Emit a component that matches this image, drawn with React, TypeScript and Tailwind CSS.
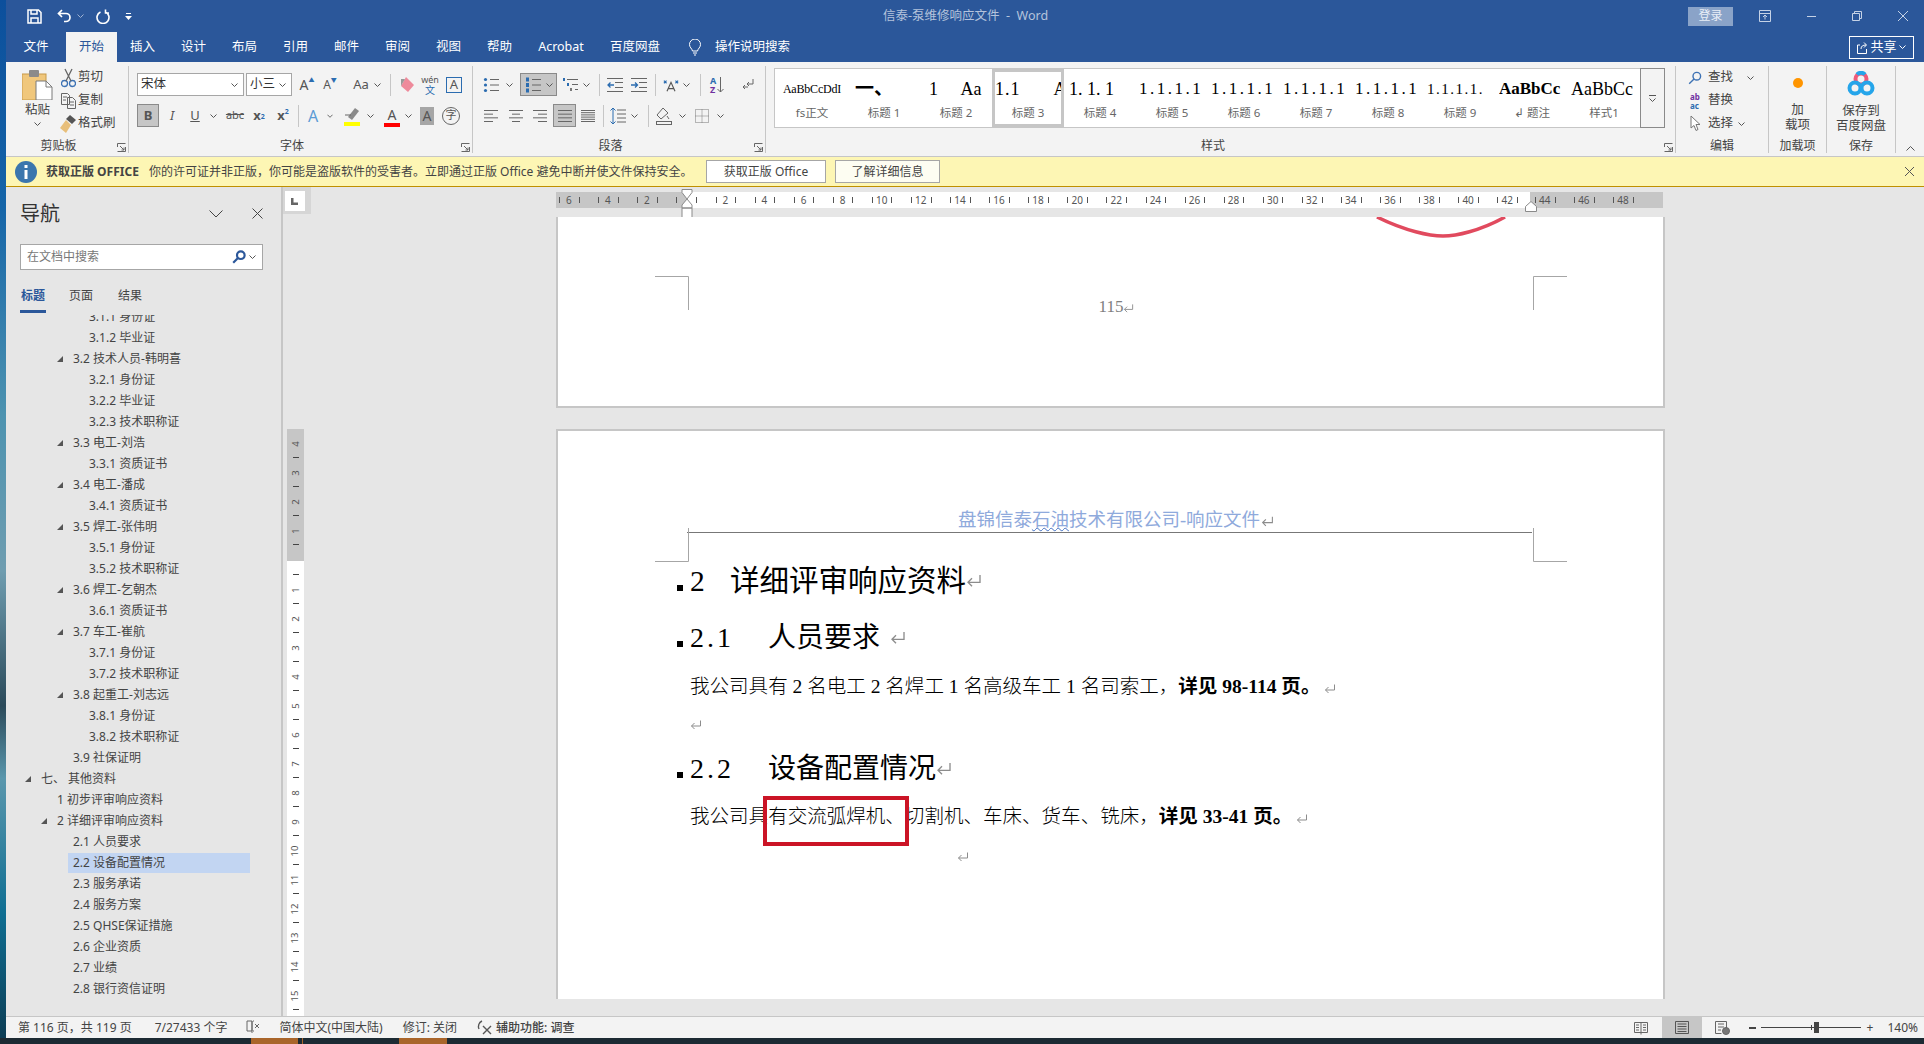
import type { ReactNode } from 'react'
import { clsx } from 'clsx'

const SERIF = "font-['Liberation_Serif','Noto_Sans_CJK_SC',serif]"

function Chev({ color = '#555' }: { color?: string }) {
  return (
    <svg width="7" height="4" viewBox="0 0 7 4" fill="none" stroke={color}>
      <path d="M.5.5 3.5 3.5 6.5.5" />
    </svg>
  )
}

function Ret({ size = 12, className }: { size?: number; className?: string }) {
  return (
    <svg width={size} height={size} viewBox="0 0 12 12" fill="none" stroke="#8c8c8c" strokeWidth="1" className={clsx('inline-block', className)}>
      <path d="M10.5 1.5V7H1.5M4.5 4 1.5 7l3 3" />
    </svg>
  )
}

function Slot({ className, children }: { className?: string; children?: ReactNode }) {
  return <div className={clsx('flex h-full shrink-0 items-center justify-center', className)}>{children}</div>
}

function Sep({ className }: { className?: string }) {
  return <div className={clsx('h-[22px] w-px shrink-0 bg-[#c6c6c6]', className)} />
}

function Launcher() {
  return (
    <svg width="9" height="9" viewBox="0 0 9 9" fill="none" stroke="#666" className="absolute bottom-[1px] right-[2px]">
      <path d="M.5 4V.5H8.5M.5 8.5H8.5V4M3 3l4 4M7 4.5V7H4.5" />
    </svg>
  )
}

function Lines({ rows, w = 16 }: { rows: [number, number][]; w?: number }) {
  return (
    <svg width={w} height="14" viewBox={`0 0 ${w} 14`} stroke="#666" strokeWidth="1">
      {rows.map(([a, b], i) => (
        <path key={i} d={`M${a} ${1.5 + i * (11 / (rows.length - 1))}H${b}`} />
      ))}
    </svg>
  )
}

function BulletIcon({ numbered }: { numbered?: boolean }) {
  return (
    <svg width="16" height="16" viewBox="0 0 16 16">
      {[2.5, 8, 13.5].map((y) => (
        <g key={y}>
          {numbered ? <rect x="1" y={y - 2} width="3" height="4" fill="#2b6cb0" /> : <circle cx="2.5" cy={y} r="1.6" fill="#2b6cb0" />}
          <path d={`M7 ${y}H16`} stroke="#666" />
        </g>
      ))}
    </svg>
  )
}

function MultiIcon() {
  return (
    <svg width="16" height="16" viewBox="0 0 16 16">
      <rect x="0" y="1" width="2" height="3" fill="#2b6cb0" />
      <rect x="4" y="6" width="2" height="3" fill="#2b6cb0" />
      <rect x="7" y="11" width="2" height="3" fill="#7a7a7a" />
      <path d="M4 2.5H15M9 7.5H15M12 12.5H15" stroke="#666" />
    </svg>
  )
}

function IndentIcon({ inc }: { inc?: boolean }) {
  return (
    <svg width="16" height="14" viewBox="0 0 16 14" fill="none">
      <path d="M0 .5H16M0 13.5H16M8 4.5H16M8 9.5H16" stroke="#666" />
      <path d={inc ? 'M0 7H6M4 4.5 6.5 7 4 9.5' : 'M7 7H1M3.5 4.5 1 7l2.5 2.5'} stroke="#2b6cb0" strokeWidth="1.3" />
    </svg>
  )
}

function PasteIcon() {
  return (
    <svg width="31" height="30" viewBox="0 0 31 30">
      <rect x="0" y="4" width="24" height="26" fill="#f0c77c" stroke="#c79a4a" />
      <rect x="7" y="0" width="10" height="7" rx="1" fill="#8a8a8a" />
      <path d="M14 11h10l6 6v13H14z" fill="#fff" stroke="#7a7a7a" />
      <path d="M24 11v6h6" fill="none" stroke="#7a7a7a" />
    </svg>
  )
}

function BaiduIcon() {
  return (
    <svg width="28" height="26" viewBox="0 0 28 26" fill="none" strokeWidth="4">
      <circle cx="14" cy="8" r="5.5" stroke="#ef5a7a" />
      <circle cx="8" cy="17" r="5.5" stroke="#25a5ea" />
      <circle cx="20" cy="17" r="5.5" stroke="#25a5ea" />
      <path d="M10 3.5a5.5 5.5 0 0 1 8 0" stroke="#25a5ea" />
    </svg>
  )
}

function SearchGlyph({ color = '#2b579a', width = 2.2 }: { color?: string; width?: number }) {
  return (
    <svg width="14" height="14" viewBox="0 0 14 14" fill="none" stroke={color} strokeWidth={width}>
      <circle cx="8.8" cy="5.2" r="3.8" />
      <path d="M6 8 1.2 12.8" />
    </svg>
  )
}

function CropMark({ className, d }: { className: string; d: string }) {
  return (
    <svg width="34" height="34" viewBox="0 0 34 34" fill="none" stroke="#a6a6a6" className={clsx('absolute', className)}>
      <path d={d} />
    </svg>
  )
}

function Group({ className, label, labelClass, launcher, children }: { className: string; label: string; labelClass?: string; launcher?: boolean; children?: ReactNode }) {
  return (
    <div className={clsx('flex h-[87px] shrink-0 flex-col border-r border-[#c6c6c6]', className)}>
      <div className="min-h-0 flex-1">{children}</div>
      <div className={clsx('relative h-[15px] text-center text-[12px] leading-[15px] text-[#444]', labelClass)}>
        {label}
        {launcher && <Launcher />}
      </div>
    </div>
  )
}

function TitleBar() {
  return (
    <div className="flex h-[32px] items-center bg-[#2b579a] pl-[21px] text-white">
      <Slot className="w-[15px]">
        <svg width="15" height="15" viewBox="0 0 15 15" fill="none" stroke="#fff" strokeWidth="1.5">
          <path d="M1 1h10.5L14 3.5V14H1zM4 1v4h6V1M4 14V9h7v5" />
        </svg>
      </Slot>
      <Slot className="ml-[15px] w-[15px]">
        <svg width="15" height="14" viewBox="0 0 15 14" fill="none" stroke="#fff" strokeWidth="1.7">
          <path d="M5 1 1.5 4.5 5 8M2 4.5h7a4 4 0 0 1 0 8H7" />
        </svg>
      </Slot>
      <Slot className="ml-[4px] w-[8px]">
        <Chev color="#9fb3d3" />
      </Slot>
      <Slot className="ml-[12px] w-[14px]">
        <svg width="14" height="15" viewBox="0 0 14 15" fill="none" stroke="#fff" strokeWidth="1.6">
          <path d="M4.5 3a6 6 0 1 0 5 0M9.500 .5V4H13" />
        </svg>
      </Slot>
      <Slot className="ml-[14px] w-[8px]">
        <svg width="7" height="7" viewBox="0 0 7 7" fill="#fff">
          <path d="M1 0h5v1H1zM0 3h7L3.5 7z" />
        </svg>
      </Slot>
      <div className="ml-[751px] text-[12.5px] text-[#b4c3dc]">信泰-泵维修响应文件&nbsp; -&nbsp; Word</div>
      <div className="ml-auto flex h-[19px] w-[45px] items-center justify-center bg-[#8aa3c8] text-[12px] text-[#e8eef7]">登录</div>
      <Slot className="ml-[25px] w-[14px]">
        <svg width="12" height="12" viewBox="0 0 12 12" fill="none" stroke="#c5d2e6">
          <path d="M.5.5h11v11H.5zM.5 3.5h11M6 9.5V5M4 7l2-2 2 2" />
        </svg>
      </Slot>
      <Slot className="ml-[34px] w-[10px]">
        <div className="h-px w-[9px] bg-[#c5d2e6]" />
      </Slot>
      <Slot className="ml-[36px] w-[10px]">
        <svg width="10" height="10" viewBox="0 0 10 10" fill="none" stroke="#c5d2e6">
          <path d="M.5 2.5h7v7h-7zM2.5 2.5v-2h7v7h-2" />
        </svg>
      </Slot>
      <Slot className="ml-[36px] mr-[16px] w-[10px]">
        <svg width="10" height="10" viewBox="0 0 10 10" stroke="#c5d2e6">
          <path d="M0 0 10 10M10 0 0 10" />
        </svg>
      </Slot>
    </div>
  )
}

function TabBar() {
  const tabs = [
    { t: '插入', w: 'w-[51px]' },
    { t: '设计', w: 'w-[51px]' },
    { t: '布局', w: 'w-[51px]' },
    { t: '引用', w: 'w-[51px]' },
    { t: '邮件', w: 'w-[51px]' },
    { t: '审阅', w: 'w-[51px]' },
    { t: '视图', w: 'w-[51px]' },
    { t: '帮助', w: 'w-[51px]' },
    { t: 'Acrobat', w: 'w-[72px]' },
    { t: '百度网盘', w: 'w-[76px]' },
  ]
  return (
    <div className="flex h-[30px] items-center bg-[#2b579a] text-[12.5px] text-white">
      <Slot className="w-[60px]">文件</Slot>
      <Slot className="w-[51px] bg-[#f3f3f3] text-[#2b579a]">开始</Slot>
      {tabs.map((tab) => (
        <Slot key={tab.t} className={tab.w}>
          {tab.t}
        </Slot>
      ))}
      <Slot className="ml-[14px] w-[16px]">
        <svg width="12" height="17" viewBox="0 0 12 17" fill="none" stroke="#fff">
          <path d="M3.5 12C3 9.5.5 8.5.5 5.5a5.500 5.500 0 0 1 11 0c0 3-2.500 4-3 6.500zM4 14h4M5 16h2" />
        </svg>
      </Slot>
      <div className="ml-[12px]">操作说明搜索</div>
      <div className="ml-auto mr-[10px] flex h-[23px] w-[65px] items-center justify-center gap-[2px] border border-white text-[13px]">
        <svg width="11" height="13" viewBox="0 0 11 13" fill="none" stroke="#fff">
          <path d="M3 4H.5v8.500h9V8M4 8c0-3 2-4 5-4M7 1.500 9.500 4 7 6.500" />
        </svg>
        共享
        <Chev color="#fff" />
      </div>
    </div>
  )
}

function ClipRow({ icon, text }: { icon: ReactNode; text: string }) {
  return (
    <div className="flex h-[23px] items-center">
      <Slot className="w-[16px]">{icon}</Slot>
      <span className="ml-[2px]">{text}</span>
    </div>
  )
}

function ClipboardGroup() {
  return (
    <Group className="w-[123px]" labelClass="pr-[17px]" label="剪贴板" launcher>
      <div className="flex text-[12.5px] text-[#444]">
        <div className="ml-[16px] mt-[4px] flex w-[31px] flex-col items-center">
          <PasteIcon />
          <span className="mt-[1px] leading-[18px]">粘贴</span>
          <div className="mt-[3px]">
            <Chev />
          </div>
        </div>
        <div className="ml-[7px]">
          <ClipRow
            text="剪切"
            icon={
              <svg width="15" height="20" viewBox="0 0 15 20" fill="none" stroke="#3d72b4" strokeWidth="1.3">
                <circle cx="3.500" cy="15.500" r="3" />
                <circle cx="11.500" cy="15.500" r="3" />
                <path d="M5 13 11 1M10 13 4 1" stroke="#666" />
              </svg>
            }
          />
          <ClipRow
            text="复制"
            icon={
              <svg width="15" height="16" viewBox="0 0 15 16" fill="none" stroke="#666">
                <path d="M.5.5h6l2 2v9h-8zM6.500 4.500h5l3 3v8h-8zM2 4h4M2 7h3M9 9h4M9 12h4" />
              </svg>
            }
          />
          <ClipRow
            text="格式刷"
            icon={
              <svg width="16" height="18" viewBox="0 0 16 18">
                <path d="M10 0l6 5-4 4-6-5z" fill="#555" />
                <path d="M6 5l5 5-5 8-6-5z" fill="#e8bf7a" />
              </svg>
            }
          />
        </div>
      </div>
    </Group>
  )
}

function FontGroup() {
  return (
    <Group className="w-[344px]" labelClass="pr-[17px]" label="字体" launcher>
      <div className="pt-[7px] text-[#555]">
        <div className="flex h-[23px] items-center">
          <div className="ml-[8px] flex h-full w-[107px] shrink-0 items-center border border-[#a6a6a6] bg-white pl-[3px] pr-[5px] text-[12.5px] text-[#333]">
            <span className="flex-1">宋体</span>
            <Chev />
          </div>
          <div className="ml-[2px] flex h-full w-[46px] shrink-0 items-center border border-[#a6a6a6] bg-white pl-[3px] pr-[5px] text-[12.5px] text-[#333]">
            <span className="flex-1">小三</span>
            <Chev />
          </div>
          <Slot className="w-[30px] text-[14px]">
            A<span className="mb-[8px] text-[6px] text-[#2b6cb0]">▲</span>
          </Slot>
          <Slot className="w-[16px] text-[12px]">
            A<span className="mb-[8px] text-[6px] text-[#2b6cb0]">▼</span>
          </Slot>
          <Slot className="ml-[12px] w-[22px] text-[13px]">Aa</Slot>
          <Slot className="w-[10px]">
            <Chev />
          </Slot>
          <Sep className="ml-[8px]" />
          <Slot className="w-[30px]">
            <svg width="16" height="18" viewBox="0 0 16 18">
              <path d="M8 1l8 8-6 7-7-6z" fill="#ee8a9b" />
              <path d="M3 3l4 0-4 7z" fill="#999" />
            </svg>
          </Slot>
          <div className="flex h-full w-[18px] shrink-0 flex-col items-center justify-center text-[9px] leading-[11px]">
            <span>wén</span>
            <span className="text-[10px] text-[#2b6cb0]">文</span>
          </div>
          <div className="ml-[7px] flex h-[16px] w-[16px] shrink-0 items-center justify-center border border-[#2b6cb0] text-[13px] leading-none">A</div>
        </div>
        <div className="mt-[8px] flex h-[23px] items-center text-[13px]">
          <Slot className="ml-[8px] w-[22px] border border-[#8a8a8a] bg-[#c6c6c6] font-bold">B</Slot>
          <Slot className="w-[26px] italic">I</Slot>
          <Slot className="w-[20px] underline">U</Slot>
          <Slot className="w-[16px]">
            <Chev />
          </Slot>
          <Slot className="w-[28px] text-[11px] line-through">abc</Slot>
          <Slot className="w-[20px] font-bold">
            x<sub className="text-[7px] text-[#2b6cb0]">2</sub>
          </Slot>
          <Slot className="w-[28px] font-bold">
            x<sup className="text-[7px] text-[#2b6cb0]">2</sup>
          </Slot>
          <Sep className="ml-[1px]" />
          <Slot className="w-[28px] text-[16px] text-[#5b9bd5]">A</Slot>
          <Slot className="w-[6px]">
            <Chev />
          </Slot>
          <div className="ml-[9px] flex h-[20px] w-[20px] shrink-0 flex-col items-center justify-end">
            <svg width="16" height="14" viewBox="0 0 16 14">
              <path d="M11 0l4 3-7 9-4-3z" fill="#8a8a8a" />
              <path d="M1 7h6" stroke="#666" />
            </svg>
            <div className="h-[4px] w-[16px] bg-[#ffff00]" />
          </div>
          <Slot className="ml-[3px] w-[10px]">
            <Chev />
          </Slot>
          <div className="ml-[7px] flex h-[22px] w-[20px] shrink-0 flex-col items-center justify-end text-[14px] leading-[16px]">
            A
            <div className="h-[4px] w-[16px] bg-[#ff0000]" />
          </div>
          <Slot className="ml-[1px] w-[10px]">
            <Chev />
          </Slot>
          <Slot className="ml-[7px] !h-[18px] w-[14px] bg-[#a6a6a6] text-[14px]">A</Slot>
          <div className="ml-[8px] flex h-[18px] w-[18px] shrink-0 items-center justify-center rounded-full border border-[#666] text-[11px]">字</div>
        </div>
      </div>
    </Group>
  )
}

function ParagraphGroup() {
  return (
    <Group className="w-[293px]" labelClass="pr-[17px]" label="段落" launcher>
      <div className="pt-[7px]">
        <div className="flex h-[23px] items-center">
          <Slot className="ml-[10px] w-[16px]">
            <BulletIcon />
          </Slot>
          <Slot className="ml-[5px] w-[10px]">
            <Chev />
          </Slot>
          <div className="ml-[6px] flex h-full w-[37px] shrink-0 items-center justify-center gap-[5px] border border-[#8a8a8a] bg-[#c6c6c6]">
            <BulletIcon numbered />
            <Chev />
          </div>
          <Slot className="ml-[6px] w-[16px]">
            <MultiIcon />
          </Slot>
          <Slot className="ml-[2px] w-[10px]">
            <Chev />
          </Slot>
          <Sep className="ml-[8px]" />
          <Slot className="ml-[7px] w-[16px]">
            <IndentIcon />
          </Slot>
          <Slot className="ml-[8px] w-[16px]">
            <IndentIcon inc />
          </Slot>
          <Sep className="ml-[8px]" />
          <Slot className="ml-[7px] w-[16px]">
            <svg width="18" height="16" viewBox="0 0 18 16" fill="none" stroke="#555" strokeWidth="1.3">
              <path d="M4.500 15 9 5l4.500 10M6 12h6" />
              <path d="M1 6l3-3M1 3l3 3M14 3l3 3M14 6l3-3" stroke="#2b6cb0" />
            </svg>
          </Slot>
          <Slot className="ml-[2px] w-[10px]">
            <Chev />
          </Slot>
          <Sep className="ml-[9px]" />
          <div className="ml-[9px] flex h-full w-[16px] shrink-0 items-center">
            <div className="flex flex-col text-[9px] font-bold leading-[9px]">
              <span className="text-[#2b6cb0]">A</span>
              <span className="text-[#7030a0]">Z</span>
            </div>
            <svg width="7" height="16" viewBox="0 0 7 16" fill="none" stroke="#666" className="ml-[1px]">
              <path d="M3.500 0V15M.5 12l3 3 3-3" />
            </svg>
          </div>
          <Slot className="ml-[14px] w-[16px]">
            <svg width="13" height="14" viewBox="0 0 13 14" fill="none" stroke="#666">
              <path d="M11 1v5H5M7 4 5 6l2 2M1 9h5M3 7 1 9l2 2" />
            </svg>
          </Slot>
        </div>
        <div className="mt-[8px] flex h-[23px] items-center">
          <Slot className="ml-[10px] w-[16px]">
            <Lines rows={[[1, 15], [1, 10], [1, 15], [1, 10]]} />
          </Slot>
          <Slot className="ml-[9px] w-[16px]">
            <Lines rows={[[1, 15], [4, 12], [1, 15], [4, 12]]} />
          </Slot>
          <Slot className="ml-[8px] w-[16px]">
            <Lines rows={[[1, 15], [6, 15], [1, 15], [6, 15]]} />
          </Slot>
          <Slot className="ml-[5px] w-[23px] border border-[#8a8a8a] bg-[#c6c6c6]">
            <Lines rows={[[1, 15], [1, 15], [1, 15], [1, 15]]} />
          </Slot>
          <Slot className="ml-[4px] w-[16px]">
            <Lines rows={[[1, 15], [1, 15], [1, 15], [1, 15], [1, 15], [1, 15]]} />
          </Slot>
          <Sep className="ml-[7px]" />
          <Slot className="ml-[6px] w-[16px]">
            <svg width="16" height="16" viewBox="0 0 16 16" fill="none">
              <path d="M7 2H16M7 6H16M7 10H16M7 14H16" stroke="#666" />
              <path d="M3 0V16M.5 2.500 3 0l2.500 2.500M.5 13.500 3 16l2.500-2.500" stroke="#2b6cb0" />
            </svg>
          </Slot>
          <Slot className="ml-[3px] w-[10px]">
            <Chev />
          </Slot>
          <Sep className="ml-[9px]" />
          <Slot className="ml-[7px] w-[16px]">
            <svg width="16" height="18" viewBox="0 0 16 18" fill="none" stroke="#666">
              <path d="M7 1 1 8l4 4 7-6zM11 9l2 3" />
              <rect x=".5" y="14.500" width="15" height="3" />
            </svg>
          </Slot>
          <Slot className="ml-[5px] w-[10px]">
            <Chev />
          </Slot>
          <Slot className="ml-[7px] w-[16px]">
            <svg width="14" height="14" viewBox="0 0 14 14" fill="none" stroke="#777" strokeDasharray="1 1">
              <path d="M.5.5h13v13H.5zM.5 7h13M7 .5v13" />
            </svg>
          </Slot>
          <Slot className="ml-[5px] w-[10px]">
            <Chev />
          </Slot>
        </div>
      </div>
    </Group>
  )
}

const styleItems = [
  { s: 'AaBbCcDdI', l: 'fs正文', c: 'text-[12px] tracking-[-0.2px] justify-center' },
  { s: '一、', l: '标题 1', c: 'text-[19px] font-semibold pl-[4px]' },
  { s: '1\u00a0\u00a0\u00a0\u00a0\u00a0Aa', l: '标题 2', c: 'text-[18px] pl-[6px]' },
  { s: '1.1\u00a0\u00a0\u00a0\u00a0\u00a0\u00a0A', l: '标题 3', c: 'text-[18px] tracking-[1px]' },
  { s: '1. 1. 1', l: '标题 4', c: 'text-[18px] pl-[2px]' },
  { s: '1.1.1.1', l: '标题 5', c: 'text-[17px] tracking-[2.5px]' },
  { s: '1.1.1.1', l: '标题 6', c: 'text-[17px] tracking-[2.5px]' },
  { s: '1.1.1.1', l: '标题 7', c: 'text-[17px] tracking-[2.5px]' },
  { s: '1.1.1.1', l: '标题 8', c: 'text-[17px] tracking-[2.5px]' },
  { s: '1.1.1.1.', l: '标题 9', c: 'text-[15px] tracking-[1.5px]' },
  { s: 'AaBbCc', l: '↲ 题注', c: 'text-[17px] font-bold' },
  { s: 'AaBbCc', l: '样式1', c: 'text-[18px]' },
]

function StylesGroup() {
  return (
    <Group className="w-[910px]" labelClass="pr-[15px]" label="样式" launcher>
      <div className="ml-[8px] mt-[2px] flex h-[60px] w-[891px] bg-white">
        <div className="flex h-full flex-1 border border-r-0 border-[#c6c6c6] pl-px">
          {styleItems.map((item, i) => (
            <div key={i} className={clsx('flex w-[72px] shrink-0 flex-col border-[3px]', i === 3 ? 'border-[#c6c6c6]' : 'border-transparent')}>
              <div className={clsx(SERIF, 'flex h-[34px] items-center overflow-hidden whitespace-nowrap text-black', item.c)}>{item.s}</div>
              <div className="h-[14px] text-center text-[11.5px] leading-[14px] text-[#666]">{item.l}</div>
            </div>
          ))}
        </div>
        <div className="flex h-full w-[25px] shrink-0 flex-col items-center justify-center gap-[2px] border border-[#8a8a8a] bg-[#f3f3f3]">
          <div className="h-px w-[7px] bg-[#555]" />
          <Chev />
        </div>
      </div>
    </Group>
  )
}

function EditRow({ icon, text, chev }: { icon: ReactNode; text: string; chev?: string }) {
  return (
    <div className="flex h-[23px] items-center">
      <Slot className="w-[18px]">{icon}</Slot>
      <span className="ml-[4px]">{text}</span>
      {chev && (
        <div className={chev}>
          <Chev />
        </div>
      )}
    </div>
  )
}

function EditGroup() {
  return (
    <Group className="w-[93px]" label="编辑">
      <div className="pl-[10px] text-[12.5px] text-[#444]">
        <EditRow text="查找" chev="ml-[14px]" icon={<SearchGlyph color="#3d72b4" width={1.4} />} />
        <EditRow
          text="替换"
          icon={
            <div className="flex flex-col text-[8px] font-bold leading-[9px]">
              <span className="text-[#7030a0]">ab</span>
              <span className="text-[#2b6cb0]">ac</span>
            </div>
          }
        />
        <EditRow
          text="选择"
          chev="ml-[5px]"
          icon={
            <svg width="11" height="17" viewBox="0 0 11 17" fill="#fff" stroke="#777">
              <path d="M1 1v12l3-2.500 2 5 2-1-2-5h4z" />
            </svg>
          }
        />
      </div>
    </Group>
  )
}

function SaveGroups() {
  return (
    <>
      <Group className="w-[58px]" label="加载项">
        <div className="flex flex-col items-center pt-[12px] text-center text-[12.500px] leading-[15px] text-[#444]">
          <div className="size-[10px] rounded-full bg-[#ff9500] blur-[0.5px]" />
          <div className="mt-[14px]">加</div>
          <div>载项</div>
        </div>
      </Group>
      <Group className="w-[69px]" label="保存">
        <div className="flex flex-col items-center pt-[5px] text-center text-[12.500px] leading-[15px] text-[#444]">
          <BaiduIcon />
          <div className="mt-[6px]">保存到</div>
          <div>百度网盘</div>
        </div>
      </Group>
      <div className="flex h-[87px] flex-1 items-end justify-center pb-[2px]">
        <svg width="9" height="5" viewBox="0 0 9 5" fill="none" stroke="#555">
          <path d="M.5 4.500 4.500.5 8.500 4.500" />
        </svg>
      </div>
    </>
  )
}

function Ribbon() {
  return (
    <div className="flex h-[95px] border-b border-[#c6c6c6] bg-[#f3f3f3] pt-[4px]">
      <ClipboardGroup />
      <FontGroup />
      <ParagraphGroup />
      <StylesGroup />
      <EditGroup />
      <SaveGroups />
    </div>
  )
}

function LicenseBar() {
  return (
    <div className="flex h-[30px] items-center border-b border-[#bf9000] bg-[#fdf6b4] text-[12px] text-[#444]">
      <svg width="22" height="22" viewBox="0 0 22 22" className="ml-[9px]">
        <circle cx="11" cy="11" r="11" fill="#3b76ad" />
        <rect x="9.500" y="9" width="3" height="9" fill="#fff" />
        <rect x="9.500" y="4" width="3" height="3" fill="#fff" />
      </svg>
      <span className="ml-[9px] font-bold text-[#444]">获取正版 OFFICE</span>
      <span className="ml-[10px]">你的许可证并非正版，你可能是盗版软件的受害者。立即通过正版 Office 避免中断并使文件保持安全。</span>
      <div className="ml-auto flex items-center">
        <div className="flex h-[23px] w-[120px] items-center justify-center border border-[#a6a6a6] bg-white">获取正版 Office</div>
        <div className="ml-[9px] flex h-[23px] w-[105px] items-center justify-center border border-[#a6a6a6] bg-[#fdfdf2]">了解详细信息</div>
        <svg width="9" height="9" viewBox="0 0 9 9" stroke="#555" className="ml-[965px] mr-[10px]">
          <path d="M0 0 9 9M9 0 0 9" />
        </svg>
      </div>
    </div>
  )
}

const treeRows: { level: 'a' | 'b' | 'c' | 'd'; text: string; tri?: boolean; active?: boolean }[] = [
  { level: 'a', text: '3.1.1 身份证' },
  { level: 'a', text: '3.1.2 毕业证' },
  { level: 'b', text: '3.2 技术人员-韩明喜', tri: true },
  { level: 'a', text: '3.2.1 身份证' },
  { level: 'a', text: '3.2.2 毕业证' },
  { level: 'a', text: '3.2.3 技术职称证' },
  { level: 'b', text: '3.3 电工-刘浩', tri: true },
  { level: 'a', text: '3.3.1 资质证书' },
  { level: 'b', text: '3.4 电工-潘成', tri: true },
  { level: 'a', text: '3.4.1 资质证书' },
  { level: 'b', text: '3.5 焊工-张伟明', tri: true },
  { level: 'a', text: '3.5.1 身份证' },
  { level: 'a', text: '3.5.2 技术职称证' },
  { level: 'b', text: '3.6 焊工-乞朝杰', tri: true },
  { level: 'a', text: '3.6.1 资质证书' },
  { level: 'b', text: '3.7 车工-崔航', tri: true },
  { level: 'a', text: '3.7.1 身份证' },
  { level: 'a', text: '3.7.2 技术职称证' },
  { level: 'b', text: '3.8 起重工-刘志远', tri: true },
  { level: 'a', text: '3.8.1 身份证' },
  { level: 'a', text: '3.8.2 技术职称证' },
  { level: 'b', text: '3.9 社保证明' },
  { level: 'c', text: '七、 其他资料', tri: true },
  { level: 'd', text: '1 初步评审响应资料' },
  { level: 'd', text: '2 详细评审响应资料', tri: true },
  { level: 'b', text: '2.1 人员要求' },
  { level: 'b', text: '2.2 设备配置情况', active: true },
  { level: 'b', text: '2.3 服务承诺' },
  { level: 'b', text: '2.4 服务方案' },
  { level: 'b', text: '2.5 QHSE保证措施' },
  { level: 'b', text: '2.6 企业资质' },
  { level: 'b', text: '2.7 业绩' },
  { level: 'b', text: '2.8 银行资信证明' },
]

const levelMargin = { a: 'ml-[64px]', b: 'ml-[48px]', c: 'ml-[16px]', d: 'ml-[32px]' }

function NavPane() {
  return (
    <div className="flex h-full w-[277px] shrink-0 flex-col border-r-2 border-[#c6c6c6] bg-[#e6e6e6]">
      <div className="flex h-[57px] shrink-0 items-center pb-[4px] pl-[14px]">
        <span className="text-[20px] text-[#333]">导航</span>
        <svg width="14" height="8" viewBox="0 0 14 8" fill="none" stroke="#444" className="ml-[149px]">
          <path d="M.5.5 7 7 13.500.5" />
        </svg>
        <svg width="11" height="11" viewBox="0 0 11 11" stroke="#444" className="ml-[29px]">
          <path d="M.5.5 10.500 10.500M10.500.5 .5 10.500" />
        </svg>
      </div>
      <div className="ml-[14px] flex h-[26px] w-[243px] shrink-0 items-center border border-[#a6a6a6] bg-white pl-[6px] pr-[6px] text-[12px] text-[#777]">
        <span className="flex-1">在文档中搜索</span>
        <SearchGlyph />
        <div className="ml-[3px]">
          <Chev />
        </div>
      </div>
      <div className="ml-[14px] mt-[17px] flex h-[27px] shrink-0 text-[12px] text-[#444]">
        <div className="flex w-[26px] flex-col items-center">
          <span className="font-bold text-[#2b579a]">标题</span>
          <div className="mt-[5px] h-[3px] w-full bg-[#2b579a]" />
        </div>
        <span className="ml-[23px]">页面</span>
        <span className="ml-[25px]">结果</span>
      </div>
      <div className="mt-[1px] min-h-0 flex-1 overflow-hidden">
        <div className="-mt-[9px] text-[12px] text-[#444]">
          {treeRows.map((row) => (
            <div key={row.text} className={clsx('flex h-[21px] items-center', levelMargin[row.level])}>
              <div className="flex h-full w-[19px] shrink-0 items-center pl-[3px]">
                {row.tri && (
                  <svg width="6" height="6" viewBox="0 0 6 6" fill="#555">
                    <path d="M6 0V6H0z" />
                  </svg>
                )}
              </div>
              <div className={clsx(row.active && '-ml-[5px] flex h-[20px] w-[182px] items-center bg-[#c2d5f2] pl-[5px]')}>{row.text}</div>
            </div>
          ))}
        </div>
      </div>
    </div>
  )
}

function VRulerCell({ n }: { n: number }) {
  return (
    <div className="flex h-[29px] shrink-0 flex-col items-center justify-end">
      <span className="mb-[8px] -rotate-90 text-[9.500px] leading-[10px] text-[#555]">{n}</span>
      <div className="h-px w-[6px] bg-[#444]" />
    </div>
  )
}

function VerticalRuler() {
  return (
    <div className="flex h-full w-[28px] shrink-0 flex-col">
      <div className="flex h-[27px] shrink-0 items-start justify-center bg-[#d6d6d6] pt-[4px] pr-[5px]">
        <div className="flex size-[20px] items-center justify-center bg-white">
          <svg width="7" height="7" viewBox="0 0 7 7" fill="#666">
            <path d="M0 0h2.500v4.500H7V7H0z" />
          </svg>
        </div>
      </div>
      <div className="ml-[4px] mt-[215px] flex h-[132px] w-[17px] shrink-0 flex-col bg-[#c6c6c6]">
        {[4, 3, 2, 1].map((n) => (
          <VRulerCell key={n} n={n} />
        ))}
      </div>
      <div className="ml-[4px] flex min-h-0 w-[17px] flex-1 flex-col items-center overflow-hidden bg-white pt-[13px]">
        <div className="h-px w-[6px] shrink-0 bg-[#444]" />
        {Array.from({ length: 15 }, (_, i) => (
          <VRulerCell key={i} n={i + 1} />
        ))}
      </div>
    </div>
  )
}

function HCell({ n }: { n: number }) {
  return (
    <div className="flex w-[19.550px] shrink-0 items-center">
      <div className="h-[6px] w-px shrink-0 bg-[#555]" />
      <span className="flex-1 pr-px text-center text-[10px] leading-none text-[#555]">{n % 2 === 0 ? Math.abs(n) : ''}</span>
    </div>
  )
}

function HorizontalRuler() {
  return (
    <div className="relative flex h-[16px] w-[1107px] shrink-0">
      <div className="flex h-full w-[130px] shrink-0 items-center bg-[#c6c6c6] pl-[3px]">
        {[-6, -5, -4, -3, -2, -1].map((n) => (
          <HCell key={n} n={n} />
        ))}
        <div className="h-[6px] w-px bg-[#555]" />
      </div>
      <div className="flex h-full w-[844px] shrink-0 items-center overflow-hidden bg-white pl-[10px]">
        {Array.from({ length: 43 }, (_, i) => (
          <HCell key={i} n={i + 1} />
        ))}
      </div>
      <div className="flex h-full flex-1 items-center bg-[#c6c6c6] pl-[5px]">
        {[44, 45, 46, 47, 48, 49].map((n) => (
          <HCell key={n} n={n} />
        ))}
      </div>
      <svg width="12" height="29" viewBox="0 0 12 29" className="absolute -top-[3px] left-[125px]" fill="#fff" stroke="#8a8a8a">
        <path d="M1 .5h10v3L6 10 1 3.500zM6 10l5 6v3H1v-3zM1 19h10v9.500H1z" />
      </svg>
      <svg width="12" height="11" viewBox="0 0 12 11" className="absolute left-[969px] top-[9px]" fill="#fff" stroke="#8a8a8a">
        <path d="M6 .5 11.500 5.500v5H.5v-5z" />
      </svg>
    </div>
  )
}

function Marker() {
  return <span className="mr-[7px] inline-block size-[6px] shrink-0 bg-black" />
}

function Page1() {
  return (
    <div className={clsx(SERIF, 'relative h-[191px] w-[1109px] shrink-0 border-x-2 border-b-2 border-[#c6c6c6] bg-white')}>
      <svg width="132" height="22" viewBox="0 0 132 22" fill="none" className="absolute left-[817px] top-0" stroke="#e14a5e" strokeWidth="3.500">
        <path d="M2 0C30 14 55 19 68 19S105 14 130 0" />
      </svg>
      <CropMark className="left-[97px] top-[59px]" d="M0 .5H33.500V34" />
      <CropMark className="left-[975px] top-[59px]" d="M34 .5H.5V34" />
      <div className="pl-[12px] pt-[80px] text-center text-[17px] leading-[20px] text-[#808080]">
        115
        <Ret size={11} />
      </div>
    </div>
  )
}

function Page2() {
  return (
    <div className={clsx(SERIF, 'relative mt-[21px] h-[570px] w-[1109px] shrink-0 overflow-hidden border-x-2 border-t-2 border-[#c6c6c6] bg-white text-black')}>
      <CropMark className="left-[97px] top-[97px]" d="M0 33.500H33.500V0" />
      <CropMark className="left-[975px] top-[97px]" d="M34 33.500H.5V0" />
      <div className="ml-[129px] mr-[131px] flex h-[102px] items-end justify-center border-b border-[#777] pb-[1px] pl-[13px]">
        <span className="text-[18.500px] leading-[22px] text-[#8faadc]">
          盘锦信泰
          <span className="underline decoration-[#4472c4] decoration-wavy decoration-1 underline-offset-1">石油</span>
          技术有限公司-响应文件
          <Ret size={13} className="ml-px" />
        </span>
      </div>
      <div className="pl-[119px]">
        <div className="mt-[30px] flex h-[36px] items-baseline text-[29.500px] leading-[36px]">
          <Marker />
          <span className="w-[40px] shrink-0">2</span>
          <span>详细评审响应资料</span>
          <Ret size={16} className="self-center" />
        </div>
        <div className="mt-[23px] flex h-[32px] items-baseline text-[28px] leading-[32px]">
          <Marker />
          <span className="w-[78px] shrink-0 tracking-[3px]">2.1</span>
          <span>人员要求</span>
          <Ret size={16} className="ml-[10px] self-center" />
        </div>
        <div className="mt-[20px] h-[26px] pl-[13px] text-[19.550px] font-light leading-[26px]">
          我公司具有 2 名电工 2 名焊工 1 名高级车工 1 名司索工，
          <b className="font-bold">详见 98-114 页。</b>
          <Ret size={12} className="ml-[4px]" />
        </div>
        <div className="mt-[12px] flex h-[26px] items-center pl-[13px]">
          <Ret size={12} />
        </div>
        <div className="mt-[15px] flex h-[32px] items-baseline text-[28px] leading-[32px]">
          <Marker />
          <span className="w-[78px] shrink-0 tracking-[3px]">2.2</span>
          <span>设备配置情况</span>
          <Ret size={16} className="self-center" />
        </div>
        <div className="mt-[19px] h-[26px] pl-[13px] text-[19.550px] font-light leading-[26px]">
          我公司具有交流弧焊机、切割机、车床、货车、铣床，
          <b className="font-bold">详见 33-41 页。</b>
          <Ret size={12} className="ml-[4px]" />
        </div>
        <div className="mt-[14px] flex h-[26px] items-center pl-[280px]">
          <Ret size={12} />
        </div>
      </div>
      <div className="absolute left-[205px] top-[365px] h-[50px] w-[146px] border-4 border-[#cb1426]" />
    </div>
  )
}

function StatusBar() {
  return (
    <div className="flex h-[22px] shrink-0 items-center border-t border-[#c6c6c6] bg-[#f3f3f3] text-[12px] text-[#444]">
      <span className="ml-[12px]">第 116 页，共 119 页</span>
      <span className="ml-[23px]">7/27433 个字</span>
      <svg width="15" height="15" viewBox="0 0 15 15" fill="none" stroke="#666" className="ml-[19px]">
        <path d="M1 1h5v10H1zM6 1v12M9 4l4 4M13 4 9 8M7 1h1M7 11h1" />
      </svg>
      <span className="ml-[18px]">简体中文(中国大陆)</span>
      <span className="ml-[20px]">修订: 关闭</span>
      <svg width="16" height="16" viewBox="0 0 16 16" fill="none" stroke="#555" strokeWidth="1.4" className="ml-[20px]">
        <path d="M5 1a6 6 0 0 0-3 8M6 6l8 8M14 6l-8 8" />
      </svg>
      <span className="ml-[3px] font-medium">辅助功能: 调查</span>
      <Slot className="ml-auto w-[14px]">
        <svg width="14" height="14" viewBox="0 0 14 14" fill="none" stroke="#666">
          <path d="M.5 1.500h13v10H.5zM7 1.500V13.500M2 4h3M2 6.500h3M2 9h3M9 4h3M9 6.500h3M9 9h3" />
        </svg>
      </Slot>
      <Slot className="ml-[14px] w-[40px] bg-[#c6c6c6]">
        <svg width="14" height="13" viewBox="0 0 14 13" fill="none" stroke="#555">
          <path d="M.5.5h13v12H.5zM2.500 3h9M2.500 5.500h9M2.500 8h9M2.500 10.500h9" />
        </svg>
      </Slot>
      <Slot className="w-[40px]">
        <svg width="15" height="14" viewBox="0 0 15 14" fill="none" stroke="#666">
          <path d="M.5.5h11v8M.5.5v12h6M3 3h6M3 6h6M3 9h3" />
          <circle cx="11" cy="10" r="3.500" fill="#777" />
        </svg>
      </Slot>
      <Slot className="ml-[6px] w-[8px]">
        <div className="h-[2px] w-[7px] bg-[#444]" />
      </Slot>
      <div className="relative ml-[5px] h-px w-[100px] shrink-0 bg-[#444]">
        <div className="absolute left-[50px] top-[-2px] h-[5px] w-px bg-[#444]" />
        <div className="absolute left-[53px] top-[-5px] h-[11px] w-[5px] bg-[#444]" />
      </div>
      <Slot className="ml-[4px] w-[9px]">+</Slot>
      <span className="ml-[13px] mr-[6px]">140%</span>
    </div>
  )
}

export default function App() {
  return (
    <div className="flex h-[1044px] w-[1924px] flex-col overflow-hidden bg-[#1c2a33] font-['Noto_Sans','Noto_Sans_CJK_SC',sans-serif]">
      <div className="flex h-[1038px] shrink-0">
        <div className="w-[6px] shrink-0 bg-[linear-gradient(180deg,#0c4f9c_0%,#1565a8_20%,#4d93b0_40%,#6f9db0_55%,#2b4a5a_68%,#5a97ad_75%,#0f6e92_88%,#0c3d55_100%)]" />
        <div className="flex min-w-0 flex-1 flex-col">
          <TitleBar />
          <TabBar />
          <Ribbon />
          <LicenseBar />
          <div className="flex min-h-0 flex-1 bg-[#e6e6e6]">
            <NavPane />
            <VerticalRuler />
            <div className="flex min-w-0 flex-1 flex-col pl-[245px] pt-[5px]">
              <HorizontalRuler />
              <div className="mb-[17px] mt-[9px] flex min-h-0 flex-1 flex-col overflow-hidden">
                <Page1 />
                <Page2 />
              </div>
            </div>
          </div>
          <StatusBar />
        </div>
      </div>
      <div className="flex h-[6px] shrink-0">
        <div className="ml-[251px] h-full w-[47px] bg-[#a9652a]" />
        <div className="ml-[4px] h-full w-px bg-[#a9652a]" />
        <div className="ml-[96px] h-full w-[48px] bg-[#a9652a]" />
      </div>
    </div>
  )
}
